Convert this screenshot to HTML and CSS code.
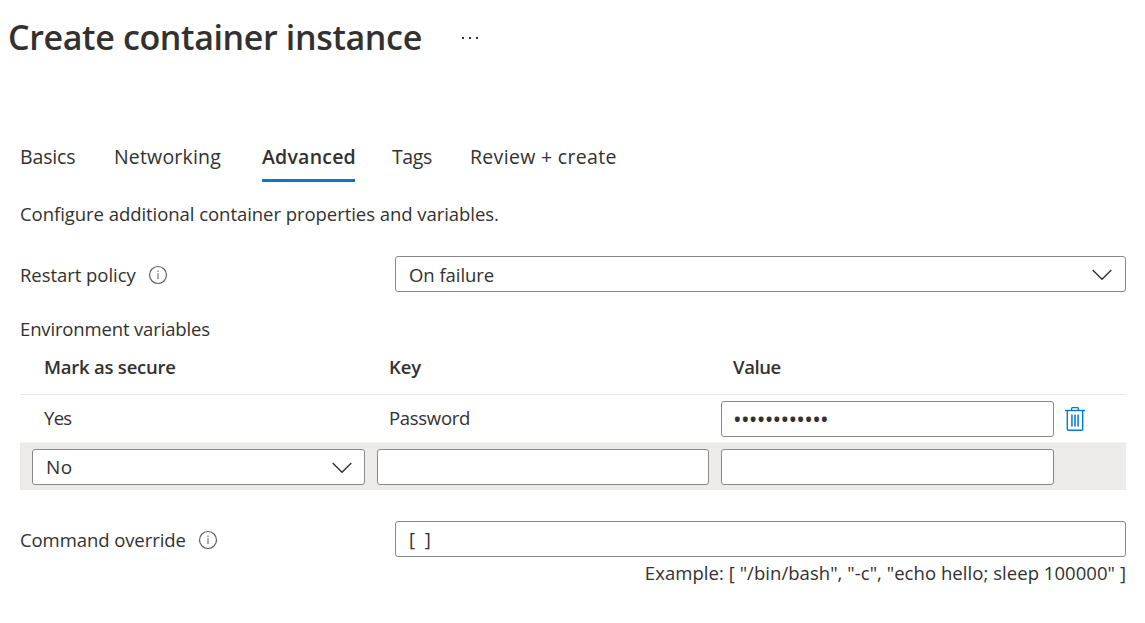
FILE: index.html
```html
<!DOCTYPE html>
<html lang="en">
<head>
<meta charset="utf-8">
<title>Create container instance</title>
<link rel="stylesheet" href="styles.css">
</head>
<body>
<header class="header">
  <h1 class="title">Create container instance</h1>
  <svg class="more" width="20" height="4" viewBox="0 0 20 4" fill="#323130"><path d="M2 1h2v2H2zM9 1h2v2H9zM16 1h2v2h-2z"/></svg>
</header>
<main class="content">
  <nav class="tabs">
    <a class="tab tab-basics">Basics</a>
    <a class="tab tab-networking">Networking</a>
    <a class="tab tab-advanced active">Advanced</a>
    <a class="tab tab-tags">Tags</a>
    <a class="tab tab-review">Review + create</a>
  </nav>
  <p class="intro">Configure additional container properties and variables.</p>
  <div class="field">
    <div class="label"><span class="restart-label">Restart policy</span>
      <svg class="info" width="20" height="20" viewBox="0 0 20 20" fill="none"><circle cx="10" cy="10" r="8.5" stroke="#605e5c" stroke-width="1.2"/><path d="M10 8.3v5.7M10 5.6v1.4" stroke="#797775" stroke-width="1.2"/></svg>
    </div>
    <div class="box select"><span class="policy">On failure</span>
      <svg class="chevron" width="20" height="12" viewBox="0 0 20 12" fill="none"><path d="M.7.9 10 10.2 19.3.9" stroke="#323130" stroke-width="1.4"/></svg>
    </div>
  </div>
  <h2 class="section">Environment variables</h2>
  <div class="table">
    <div class="row head">
      <div class="cell mark">Mark as secure</div>
      <div class="cell">Key</div>
      <div class="cell value">Value</div>
    </div>
    <div class="row saved">
      <div class="cell yes">Yes</div>
      <div class="cell key-name">Password</div>
      <div class="box password">••••••••••••</div>
      <svg class="trash" width="20" height="24" viewBox="0 0 20 24" fill="none" stroke="#0078d4"><path d="M0 3.5h20" stroke-width="1.4"/><path d="M6.6 3.2V1.6q0-.9.9-.9h5q.9 0 .9.9v1.6" stroke-width="1.3"/><path d="M2.3 3.8v18.4q0 1 1 1h13.4q1 0 1-1V3.8" stroke-width="1.4"/><path d="M6.9 7.5v12M10 7.5v12M13.1 7.5v12" stroke-width="1.9" stroke="#3093dd"/></svg>
    </div>
    <div class="row entry">
      <div class="box select"><span class="no">No</span>
        <svg class="chevron" width="20" height="12" viewBox="0 0 20 12" fill="none"><path d="M.7.9 10 10.2 19.3.9" stroke="#323130" stroke-width="1.4"/></svg>
      </div>
      <div class="box"></div>
      <div class="box"></div>
    </div>
  </div>
  <div class="field command">
    <div class="label"><span class="command-label">Command override</span>
      <svg class="info" width="20" height="20" viewBox="0 0 20 20" fill="none"><circle cx="10" cy="10" r="8.5" stroke="#605e5c" stroke-width="1.2"/><path d="M10 8.3v5.7M10 5.6v1.4" stroke="#797775" stroke-width="1.2"/></svg>
    </div>
    <div class="box brackets">[ ]</div>
  </div>
  <p class="example">Example: [ "/bin/bash", "-c", "echo hello; sleep 100000" ]</p>
</main>
</body>
</html>
```

FILE: styles.css
```css
* { box-sizing: border-box; }
body {
  margin: 0;
  background: #fff;
  color: #323130;
  font: 18.5px/24px "Open Sans", "Noto Sans", sans-serif;
  white-space: nowrap;
}
h1, h2, p { margin: 0; font-weight: 400; }
svg { display: block; flex: none; }

.header { display: flex; align-items: center; height: 74px; padding-left: 8px; }
.title { width: 452px; font-size: 34px; line-height: 44px; font-weight: 600; letter-spacing: -0.36px; }
.more { margin-top: 2px; }

.content { width: 1106px; margin-left: 20px; padding-top: 70px; }

.tabs { display: flex; height: 38px; font-size: 19.5px; line-height: 25px; }
.tab-basics { width: 94px; letter-spacing: -0.15px; }
.tab-networking { width: 148px; letter-spacing: 0.18px; }
.tab-advanced { width: 93px; margin-right: 37px; letter-spacing: 0.22px; }
.tab-tags { width: 78px; letter-spacing: -0.4px; }
.tab-review { letter-spacing: 0.32px; }
.tab.active { font-weight: 600; border-bottom: 3px solid #0078d4; }

.intro { margin-top: 20px; letter-spacing: -0.05px; }

.field { display: flex; align-items: center; margin-top: 30px; }
.label { display: flex; align-items: center; width: 375px; }
.label span { padding-top: 2px; }
.restart-label { width: 128px; letter-spacing: -0.05px; }
.command-label { width: 178px; letter-spacing: -0.08px; }
.info { margin-top: 1px; }
.box {
  display: flex;
  align-items: center;
  height: 36px;
  padding: 0 13px 0 12px;
  border: 1px solid #8a8886;
  border-radius: 3px;
  background: #fff;
}
.field .box { flex: 1; }
.select { justify-content: space-between; }
.entry .select { padding-right: 12px; }
.chevron { margin-top: 2px; }
.policy { padding: 2px 0 0 1px; letter-spacing: -0.05px; }
.no { padding-left: 1px; font-size: 19px; letter-spacing: 0.4px; }

.section { margin-top: 25px; font-size: 18.5px; letter-spacing: -0.15px; }

.table { margin-top: 1px; }
.row {
  display: grid;
  grid-template-columns: 333px 332px 333px 20px;
  column-gap: 12px;
  align-items: center;
  padding-left: 12px;
}
.cell { padding-left: 12px; letter-spacing: -0.08px; }
.head { height: 53px; border-bottom: 1px solid #e8e6e4; font-weight: 600; }
.head .cell { margin-top: -2px; }
.head .mark { letter-spacing: -0.23px; }
.head .value { letter-spacing: -0.4px; }
.saved { height: 48px; }
.saved .cell { margin-top: -3px; }
.saved .yes { letter-spacing: -0.7px; }
.saved .key-name { letter-spacing: -0.3px; }
.password { padding-left: 11px; font-size: 23px; letter-spacing: -0.73px; }
.trash { margin-left: -1px; }
.entry { height: 47px; background: #edebe9; box-shadow: 0 -1px #f6f5f4; }

.command { margin-top: 31px; }
.brackets { padding-left: 13px; word-spacing: 5px; }
.example { margin-top: 4px; text-align: right; letter-spacing: 0.05px; }
```
